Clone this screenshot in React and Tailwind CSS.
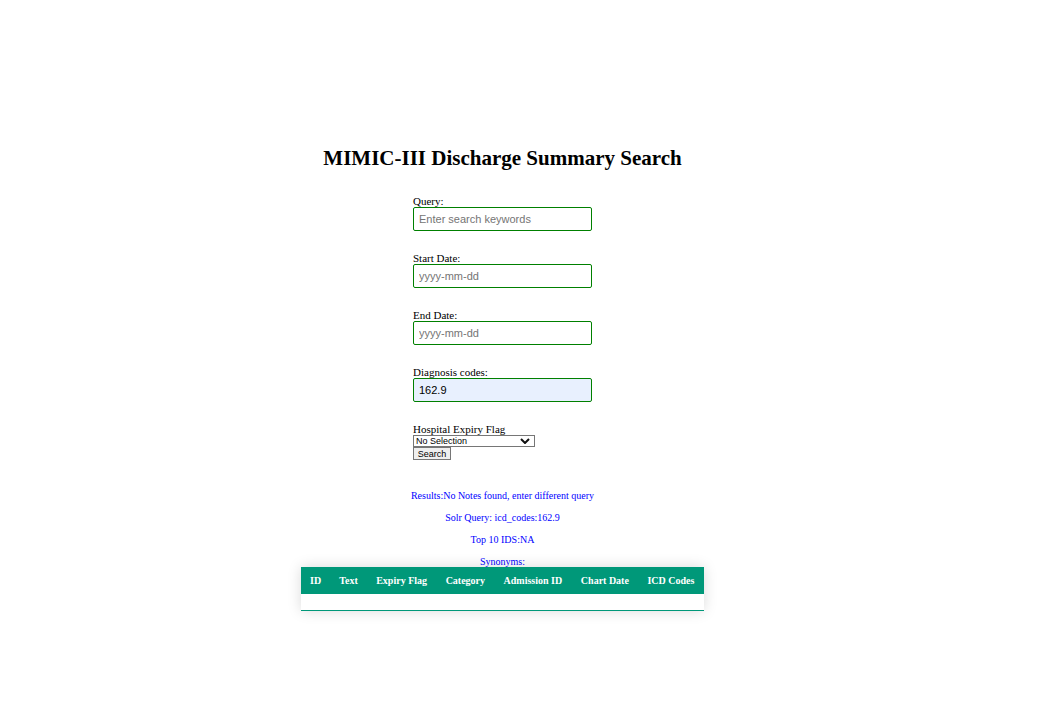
const fields = [
  { id: "query", label: "Query:", placeholder: "Enter search keywords", value: "", style: "bg-white" },
  { id: "start", label: "Start Date:", placeholder: "yyyy-mm-dd", value: "", style: "bg-white" },
  { id: "end", label: "End Date:", placeholder: "yyyy-mm-dd", value: "", style: "bg-white" },
  { id: "codes", label: "Diagnosis codes:", placeholder: "", value: "162.9", style: "bg-[#e8f0fe]" },
];

const messages = [
  "Results:No Notes found, enter different query",
  "Solr Query: icd_codes:162.9",
  "Top 10 IDS:NA",
  "Synonyms:",
];

const columns = ["ID", "Text", "Expiry Flag", "Category", "Admission ID", "Chart Date", "ICD Codes"];

export default function App() {
  return (
    <main className="flex min-h-screen flex-col items-center bg-white pt-[145px] pr-[52px] font-['Liberation_Serif',serif] text-[11px] leading-[12px] text-black">
      <h1 className="text-[21px] leading-[26px] font-bold">MIMIC-III Discharge Summary Search</h1>

      <form className="mt-[24px] flex flex-col gap-[21px]" onSubmit={(e) => e.preventDefault()}>
        {fields.map((f) => (
          <div key={f.id} className="flex flex-col">
            <label htmlFor={f.id}>{f.label}</label>
            <input
              id={f.id}
              type="text"
              placeholder={f.placeholder}
              defaultValue={f.value}
              className={`h-[24px] w-[179px] rounded-[2px] border border-[#008000] px-[5px] font-['Liberation_Sans',sans-serif] text-[11px] placeholder:text-[#757575] ${f.style}`}
            />
          </div>
        ))}
        <div className="flex flex-col items-start">
          <label htmlFor="flag">Hospital Expiry Flag</label>
          <div className="grid">
            <select
              id="flag"
              className="col-start-1 row-start-1 h-[12px] w-[122px] appearance-none border border-[#767676] bg-white pl-[2px] font-['Liberation_Sans',sans-serif] text-[9px] leading-[10px]"
            >
              <option>No Selection</option>
              <option>Yes</option>
              <option>No</option>
            </select>
            <svg
              viewBox="0 0 10 6"
              className="pointer-events-none col-start-1 row-start-1 mr-[5px] h-[6px] w-[10px] self-center justify-self-end"
              fill="none"
              stroke="#101010"
              strokeWidth="2"
              aria-hidden="true"
            >
              <path d="M1 1l4 4 4-4" />
            </svg>
          </div>
          <button
            type="submit"
            className="h-[13px] w-[38px] border border-[#767676] bg-[#efefef] font-['Liberation_Sans',sans-serif] text-[9px] leading-[10px]"
          >
            Search
          </button>
        </div>
      </form>

      <section className="mt-[30px] flex flex-col items-center gap-[10px] text-[10px] text-[#0000ff]">
        {messages.map((m) => (
          <p key={m}>{m}</p>
        ))}
      </section>

      <table className="mt-[-1px] w-[403px] border-collapse text-[10px] shadow-[0_0_13px_rgba(0,0,0,0.15)]">
        <thead>
          <tr className="bg-[#009879] text-left text-white">
            {columns.map((c) => (
              <th key={c} className="px-[9px] py-[8px] leading-[11px] font-bold whitespace-nowrap">
                {c}
              </th>
            ))}
          </tr>
        </thead>
        <tbody>
          <tr className="border-b border-[#009879]">
            <td colSpan={7} className="h-[16px] p-0" />
          </tr>
        </tbody>
      </table>
    </main>
  );
}
